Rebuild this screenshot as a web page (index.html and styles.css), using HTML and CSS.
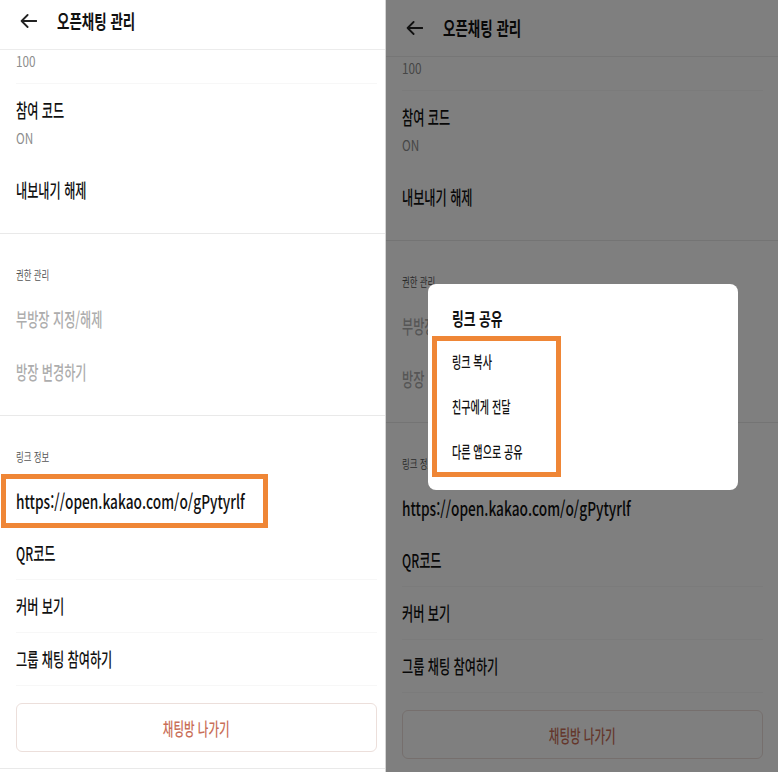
FILE: index.html
```html
<!DOCTYPE html>
<html lang="ko">
<head>
<meta charset="utf-8">
<title>오픈채팅 관리</title>
<link rel="stylesheet" href="styles.css">
</head>
<body>
  <div class="pane pane-left">
    <div class="screen">
      <div class="appbar">
        <svg class="back" width="17" height="14" viewBox="0 0 17 14"><path d="M16.5 7H1.6M7.6 1L1.6 7l6 6" fill="none" stroke="#222" stroke-width="1.8" stroke-linecap="round" stroke-linejoin="round"/></svg>
        <span class="tx title">오픈채팅 관리</span>
      </div>
      <div class="section">
        <div class="row-partial"><span class="tx sub">100</span></div>
        <div class="row-two">
          <span class="tx item">참여 코드</span>
          <span class="tx sub">ON</span>
        </div>
        <div class="row"><span class="tx item">내보내기 해제</span></div>
      </div>
      <div class="section">
        <div class="label"><span class="tx lab">권한 관리</span></div>
        <div class="row"><span class="tx item off">부방장 지정/해제</span></div>
        <div class="row"><span class="tx item off">방장 변경하기</span></div>
      </div>
      <div class="section last">
        <div class="label"><span class="tx lab">링크 정보</span></div>
        <div class="row"><span class="tx item url">https://open.kakao.com/o/gPytyrlf</span></div>
        <div class="row sep"><span class="tx item">QR코드</span></div>
        <div class="row sep"><span class="tx item">커버 보기</span></div>
        <div class="row sep"><span class="tx item">그룹 채팅 참여하기</span></div>
        <div class="leave"><span class="tx leave-text">채팅방 나가기</span></div>
      </div>
    </div>
    <div class="mark mark-link"></div>
  </div>

  <div class="divider"></div>

  <div class="pane pane-right">
    <div class="screen">
      <div class="appbar">
        <svg class="back" width="17" height="14" viewBox="0 0 17 14"><path d="M16.5 7H1.6M7.6 1L1.6 7l6 6" fill="none" stroke="#222" stroke-width="1.8" stroke-linecap="round" stroke-linejoin="round"/></svg>
        <span class="tx title">오픈채팅 관리</span>
      </div>
      <div class="section">
        <div class="row-partial"><span class="tx sub">100</span></div>
        <div class="row-two">
          <span class="tx item">참여 코드</span>
          <span class="tx sub">ON</span>
        </div>
        <div class="row"><span class="tx item">내보내기 해제</span></div>
      </div>
      <div class="section">
        <div class="label"><span class="tx lab">권한 관리</span></div>
        <div class="row"><span class="tx item off">부방장 지정/해제</span></div>
        <div class="row"><span class="tx item off">방장 변경하기</span></div>
      </div>
      <div class="section last">
        <div class="label"><span class="tx lab">링크 정보</span></div>
        <div class="row"><span class="tx item url">https://open.kakao.com/o/gPytyrlf</span></div>
        <div class="row sep"><span class="tx item">QR코드</span></div>
        <div class="row sep"><span class="tx item">커버 보기</span></div>
        <div class="row sep"><span class="tx item">그룹 채팅 참여하기</span></div>
        <div class="leave"><span class="tx leave-text">채팅방 나가기</span></div>
      </div>
    </div>
    <div class="scrim"></div>
    <div class="dialog">
      <div class="dialog-title"><span class="tx dtitle">링크 공유</span></div>
      <div class="dialog-list">
        <div class="ditem"><span class="tx dtext">링크 복사</span></div>
        <div class="ditem"><span class="tx dtext">친구에게 전달</span></div>
        <div class="ditem"><span class="tx dtext">다른 앱으로 공유</span></div>
      </div>
    </div>
    <div class="mark mark-menu"></div>
  </div>
</body>
</html>
```
FILE: styles.css
```css
* { box-sizing: border-box; }
html, body { margin: 0; padding: 0; }
body {
  width: 778px;
  height: 772px;
  overflow: hidden;
  display: flex;
  background: #fff;
  color: #1f1f1f;
  font-family: "Noto Sans CJK KR", "Noto Sans", sans-serif;
}
.pane { position: relative; height: 772px; overflow: hidden; flex: none; }
.pane-left { width: 385px; }
.divider { width: 1px; flex: none; background: #d4d4d4; }
.pane-right { width: 392px; background: #fff; }
.pane-right .screen { margin-top: 7px; }
.screen { width: 393px; background: #fff; }

.tx {
  display: inline-block;
  white-space: nowrap;
  transform: scaleX(0.64);
  transform-origin: 0 50%;
}

.appbar {
  height: 50px;
  padding: 0 0 8px 20px;
  display: flex;
  align-items: center;
  gap: 20px;
  border-bottom: 1px solid #ececec;
}
.back { flex: none; }
.title { font-size: 19px; line-height: 24px; font-weight: 700; transform: scaleX(0.71); color: #111; }

.section { border-bottom: 1px solid #e9e9e9; padding-bottom: 17px; }
.section.last { padding-bottom: 16px; }

.row-partial {
  height: 34px;
  margin: 0 16px;
  padding-top: 2px;
  display: flex;
  align-items: flex-start;
  border-bottom: 1px solid #f7f7f7;
}
.row-two {
  margin: 0 16px;
  padding: 14px 0 16px;
  display: flex;
  flex-direction: column;
  align-items: flex-start;
  gap: 7px;
}
.row {
  height: 53px;
  margin: 0 16px;
  display: flex;
  align-items: center;
}
.row.sep { border-bottom: 1px solid #f7f7f7; }

.item { font-size: 19px; line-height: 24px; font-weight: 500; color: #111; }
.item.off { color: #adadad; }
.item.url { transform: scaleX(0.72); }
.sub { font-size: 14px; line-height: 18px; color: #8d8d8d; transform: scaleX(0.84); }

.label { padding: 34px 16px 10px; display: flex; align-items: center; }
.lab { font-size: 12px; line-height: 14px; color: #555; transform: scaleX(0.7); }

.leave {
  height: 49px;
  margin: 17px 16px 0;
  border: 1px solid #ecdfdb;
  border-radius: 6px;
  display: flex;
  align-items: center;
  justify-content: center;
}
.leave-text { font-size: 18px; line-height: 24px; font-weight: 500; color: #c96f58; transform-origin: 50% 50%; }

.mark {
  position: absolute;
  border: 5px solid #ef8636;
}
.mark-link { left: 1px; top: 474px; width: 267px; height: 54px; }
.mark-menu { left: 46px; top: 336px; width: 129px; height: 141px; }

.scrim { position: absolute; inset: 0; background: rgba(0, 0, 0, 0.5); }

.dialog {
  position: absolute;
  left: 42px;
  top: 284px;
  width: 310px;
  height: 206px;
  background: #fff;
  border-radius: 8px;
  padding: 22px 24px 17px;
}
.dialog-title { height: 24px; display: flex; align-items: center; }
.dtitle { font-size: 18px; line-height: 24px; font-weight: 700; transform: scaleX(0.71); color: #111; }
.dialog-list { margin-top: 8px; }
.ditem { height: 45px; display: flex; align-items: center; }
.dtext { font-size: 16px; line-height: 22px; font-weight: 500; color: #111; transform: scaleX(0.63); }
```
